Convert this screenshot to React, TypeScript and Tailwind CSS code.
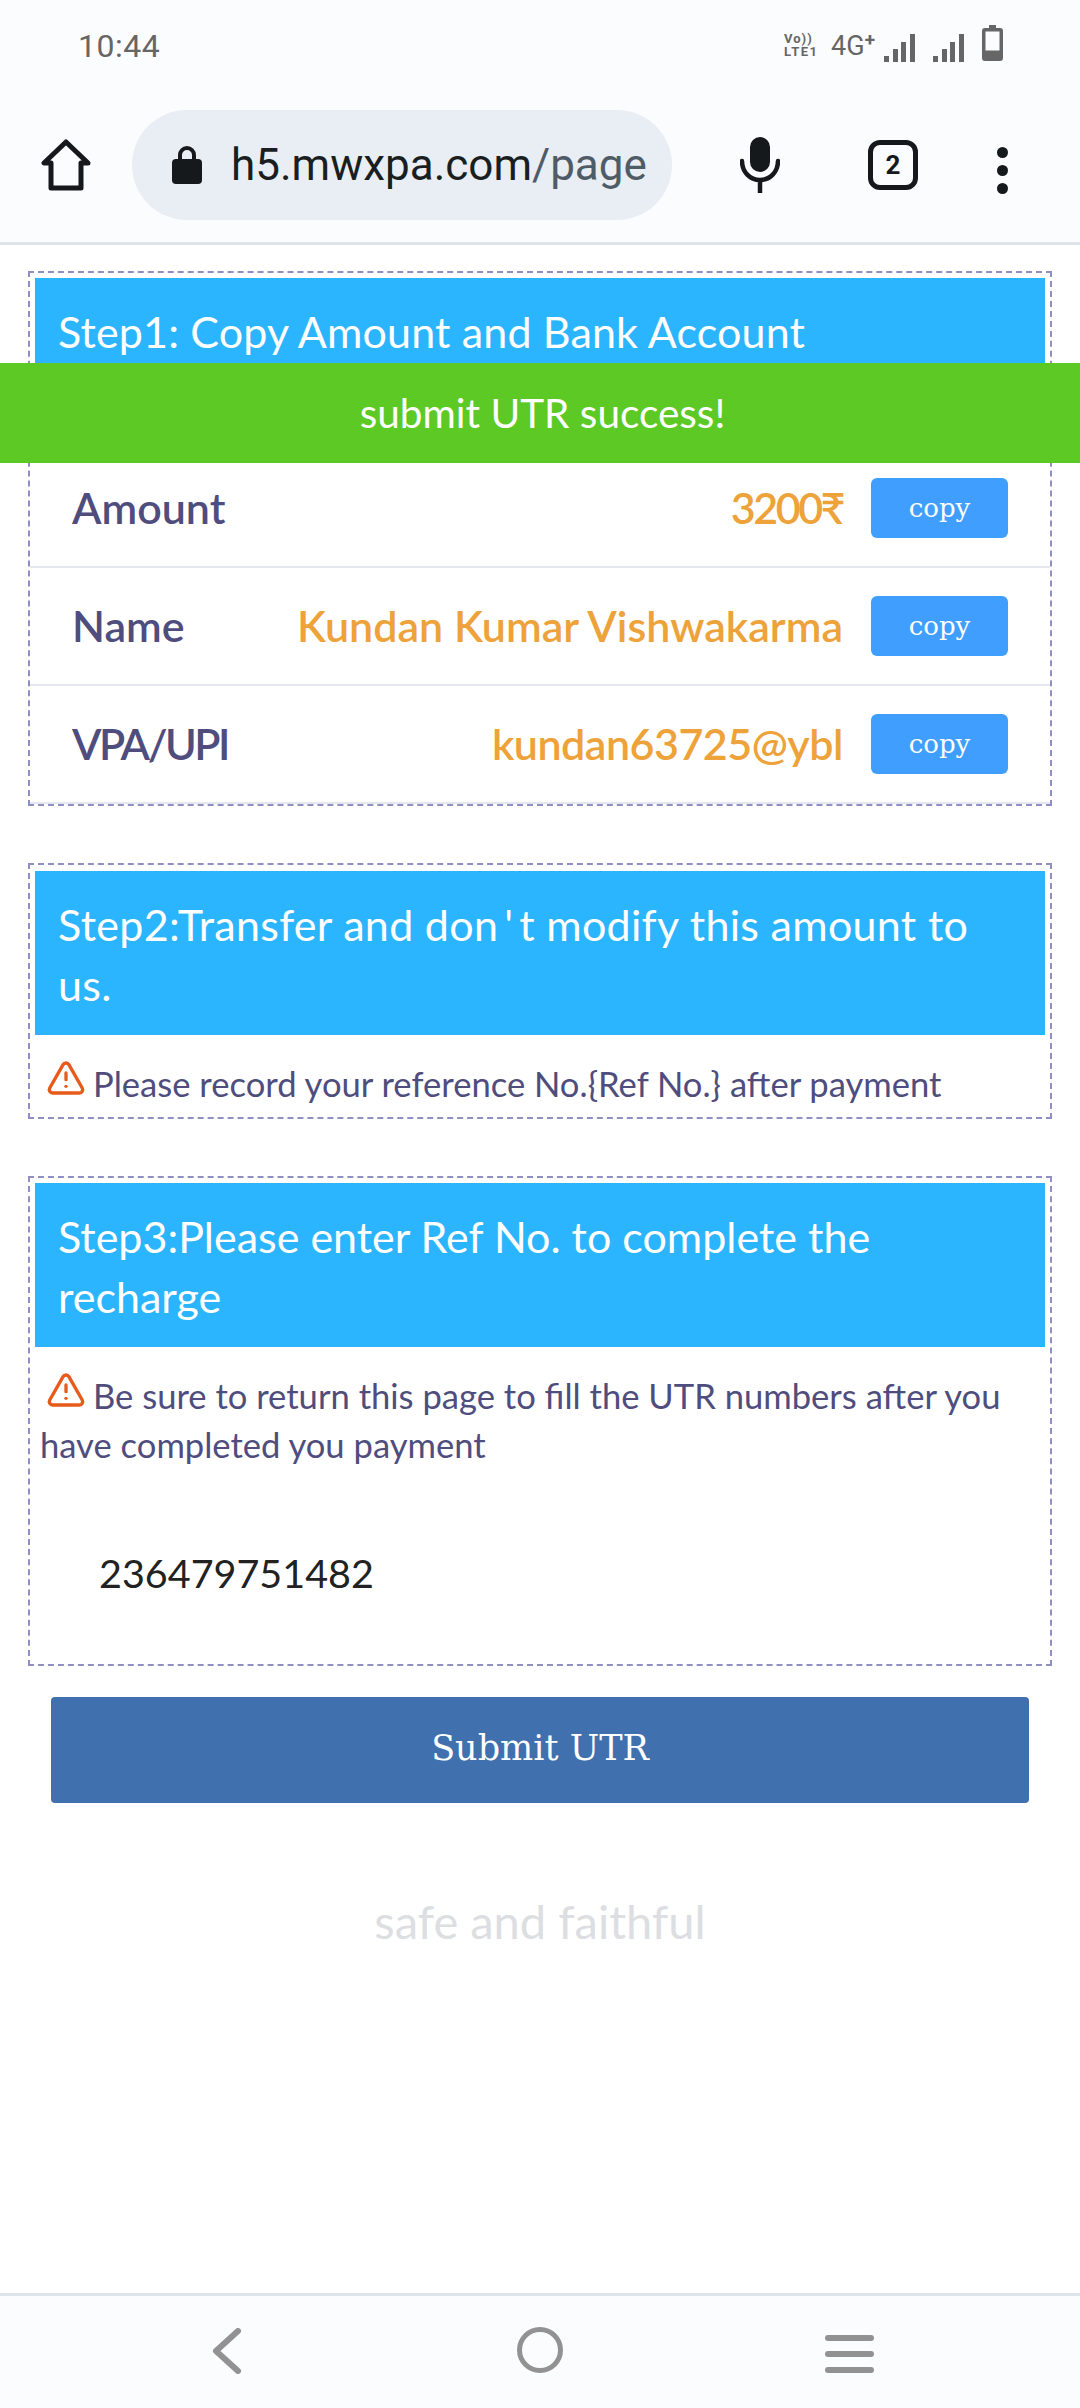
import { TriangleAlert } from "lucide-react";
import type { FC, ReactNode } from "react";

const StatusBar: FC = () => (
  <div className="h-[68px] flex items-start justify-between pl-[78px] pr-[77px] pt-[25px] font-['Roboto',sans-serif] text-[#666]">
    <span className="text-[32px] leading-[42px] tracking-[0.5px]">10:44</span>
    <div className="flex items-start">
      <div className="w-[36px] mt-[7px] mr-[11px] flex flex-col items-start text-[#666] font-bold">
        <span className="text-[13px] leading-[13px] tracking-[1px]">Vo))</span>
        <span className="text-[13px] leading-[13px] tracking-[1.5px]">LTE1</span>
      </div>
      <span className="text-[27px] leading-[36px] mt-[3px] mr-[8px]">4G</span>
      <span className="text-[19px] leading-[18px] font-bold -ml-[8px] mt-[6px] mr-[9px]">+</span>
      <Signal />
      <div className="w-[18px]" />
      <Signal />
      <svg className="ml-[18px]" width="21" height="36" viewBox="0 0 21 36" fill="#666">
        <path d="M7 0h7v3H7z" />
        <path
          fillRule="evenodd"
          d="M3 3h15a3 3 0 0 1 3 3v27a3 3 0 0 1-3 3H3a3 3 0 0 1-3-3V6a3 3 0 0 1 3-3zm.5 3.5v19h14v-19z"
        />
      </svg>
    </div>
  </div>
);

const Signal: FC = () => (
  <svg className="mt-[9px]" width="31" height="28" viewBox="0 0 31 28" fill="#666">
    <rect x="0" y="22" width="5" height="6" />
    <rect x="9" y="15" width="5" height="13" />
    <rect x="17" y="8" width="5" height="20" />
    <rect x="26" y="0" width="5" height="28" />
  </svg>
);

const Toolbar: FC = () => (
  <div className="h-[177px] border-b-[3px] border-[#dee5ea] flex items-start pt-[42px] relative">
    <svg className="ml-[41px] mt-[29px]" width="50" height="52" viewBox="0 0 50 52" fill="none" stroke="#15191c" strokeWidth="5" strokeLinejoin="round">
      <path d="M25 3 3 24h7v25h30V24h7z" />
    </svg>
    <div className="ml-[41px] w-[540px] h-[110px] rounded-full bg-[#e8eef3] flex items-center pl-[40px] overflow-hidden">
      <svg width="30" height="38" viewBox="0 0 30 38" fill="#15191c">
        <path d="M8 14V9a7 7 0 0 1 14 0v5" fill="none" stroke="#15191c" strokeWidth="4" />
        <rect x="0" y="13" width="30" height="25" rx="4" />
      </svg>
      <span className="ml-[29px] font-['Roboto',sans-serif] text-[44px] leading-[50px] whitespace-nowrap text-[#1a1e21]">
        h5.mwxpa.com
        <span className="text-[#4f5b66]">/page</span>
      </span>
    </div>
    <svg className="ml-[68px] mt-[27px]" width="40" height="56" viewBox="0 0 40 56" fill="none">
      <rect x="10" y="0" width="20" height="35" rx="10" fill="#15191c" />
      <path d="M2 24c0 11 8 19 18 19s18-8 18-19M20 43v13" stroke="#15191c" strokeWidth="4.5" strokeLinecap="round" />
    </svg>
    <div className="ml-[88px] mt-[30px] w-[50px] h-[50px] rounded-[12px] border-[5px] border-[#15191c] flex items-center justify-center font-['Roboto',sans-serif] font-bold text-[26px] text-[#15191c]">
      2
    </div>
    <div className="ml-[79px] mt-[37px] flex flex-col gap-[7px]">
      <div className="w-[11px] h-[11px] rounded-full bg-[#15191c]" />
      <div className="w-[11px] h-[11px] rounded-full bg-[#15191c]" />
      <div className="w-[11px] h-[11px] rounded-full bg-[#15191c]" />
    </div>
  </div>
);

const StepHeader: FC<{ children: ReactNode }> = ({ children }) => (
  <div className="mx-[5px] bg-[#2cb5ff] text-white text-[43px] leading-[60px] px-[23px] pt-[24px] pb-[20px]">
    {children}
  </div>
);

const InfoRow: FC<{ label: string; value: string; labelClass?: string; valueClass?: string }> = ({
  label,
  value,
  labelClass = "",
  valueClass = "tracking-[-0.5px]",
}) => (
  <div className="h-[118px] border-b-2 border-[#e4e7ed] flex items-center pl-[42px] pr-[42px] font-semibold text-[43px]">
    <span className={`text-[#4f4d7d] ${labelClass}`}>{label}</span>
    <span className={`ml-auto text-[#eda23a] ${valueClass}`}>{value}</span>
    <button className="ml-[28px] w-[137px] h-[60px] rounded-[6px] bg-[#409eff] text-white font-['DejaVu_Serif',serif] font-normal text-[26px]">
      copy
    </button>
  </div>
);

const Warning: FC<{ children: ReactNode }> = ({ children }) => (
  <p className="px-[10px] pt-[23px] text-[34.6px] leading-[49px] text-[#4f4d7d]">
    <TriangleAlert className="inline-block align-[-1px] mr-[7px] ml-[6px] text-[#e85a1a]" size={40} strokeWidth={2} />
    {children}
  </p>
);

const App: FC = () => {
  return (
    <div className="relative h-[2408px] w-[1080px] overflow-hidden bg-white flex flex-col font-['Lato','Noto_Sans',sans-serif]">
      <div className="bg-[#fbfcfe]">
        <StatusBar />
        <Toolbar />
      </div>

      <div className="flex-1 px-[28px] pt-[26px]">
        {/* Step 1 */}
        <div className="border-2 border-dashed border-[#8f8fc4] pt-[5px]">
          <StepHeader>
            <span className="tracking-[0.15px]">Step1: Copy Amount and Bank Account</span>
          </StepHeader>
          <div className="mt-[68px]">
            <InfoRow label="Amount" value="3200₹" valueClass="tracking-[-2.5px]" />
            <InfoRow label="Name" value="Kundan Kumar Vishwakarma" valueClass="tracking-[0px]" />
            <InfoRow label="VPA/UPI" value="kundan63725@ybl" labelClass="tracking-[-2.5px]" />
          </div>
        </div>

        {/* Step 2 */}
        <div className="mt-[57px] h-[256px] border-2 border-dashed border-[#8f8fc4] pt-[6px]">
          <StepHeader>
            <span className="tracking-[0.3px]">
              Step2:Transfer and don<span className="mx-[6px]">'</span>t modify this amount to
              <br />
              us.
            </span>
          </StepHeader>
          <Warning>Please record your reference No.{"{Ref No.}"} after payment</Warning>
        </div>

        {/* Step 3 */}
        <div className="mt-[57px] h-[490px] border-2 border-dashed border-[#8f8fc4] pt-[5px]">
          <StepHeader>Step3:Please enter Ref No. to complete the recharge</StepHeader>
          <Warning>Be sure to return this page to fill the UTR numbers after you have completed you payment</Warning>
          <div className="pl-[69px] mt-[79px] text-[39.5px] leading-[50px] text-[#222]">236479751482</div>
        </div>

        <button className="mt-[31px] ml-[23px] w-[978px] h-[106px] rounded-[4px] bg-[#4070ae] text-white font-['DejaVu_Serif',serif] text-[35px] pb-[3px]">
          Submit UTR
        </button>

        <p className="mt-[88px] text-center text-[47px] leading-[60px] text-[#dcdee2]">safe and faithful</p>
      </div>

      <div className="h-[115px] bg-[#fbfcfe] border-t-[3px] border-[#dee5ea] relative flex items-start">
        <svg className="ml-[211px] mt-[32px]" width="32" height="46" viewBox="0 0 32 46" fill="none" stroke="#929292" strokeWidth="6" strokeLinecap="round" strokeLinejoin="round">
          <path d="M27 3 5 23l22 20" />
        </svg>
        <div className="ml-[274px] mt-[31px] w-[46px] h-[46px] rounded-full border-[5px] border-[#929292]" />
        <div className="ml-[262px] mt-[39px] flex flex-col gap-[10px]">
          <div className="w-[49px] h-[6px] rounded-full bg-[#929292]" />
          <div className="w-[49px] h-[6px] rounded-full bg-[#929292]" />
          <div className="w-[49px] h-[6px] rounded-full bg-[#929292]" />
        </div>
      </div>

      {/* toast */}
      <div className="absolute left-0 top-[363px] w-full h-[100px] pl-[5px] bg-[#5dc925] text-white flex items-center justify-center text-[40.5px]">
        submit UTR success!
      </div>
    </div>
  );
};

export default App;
